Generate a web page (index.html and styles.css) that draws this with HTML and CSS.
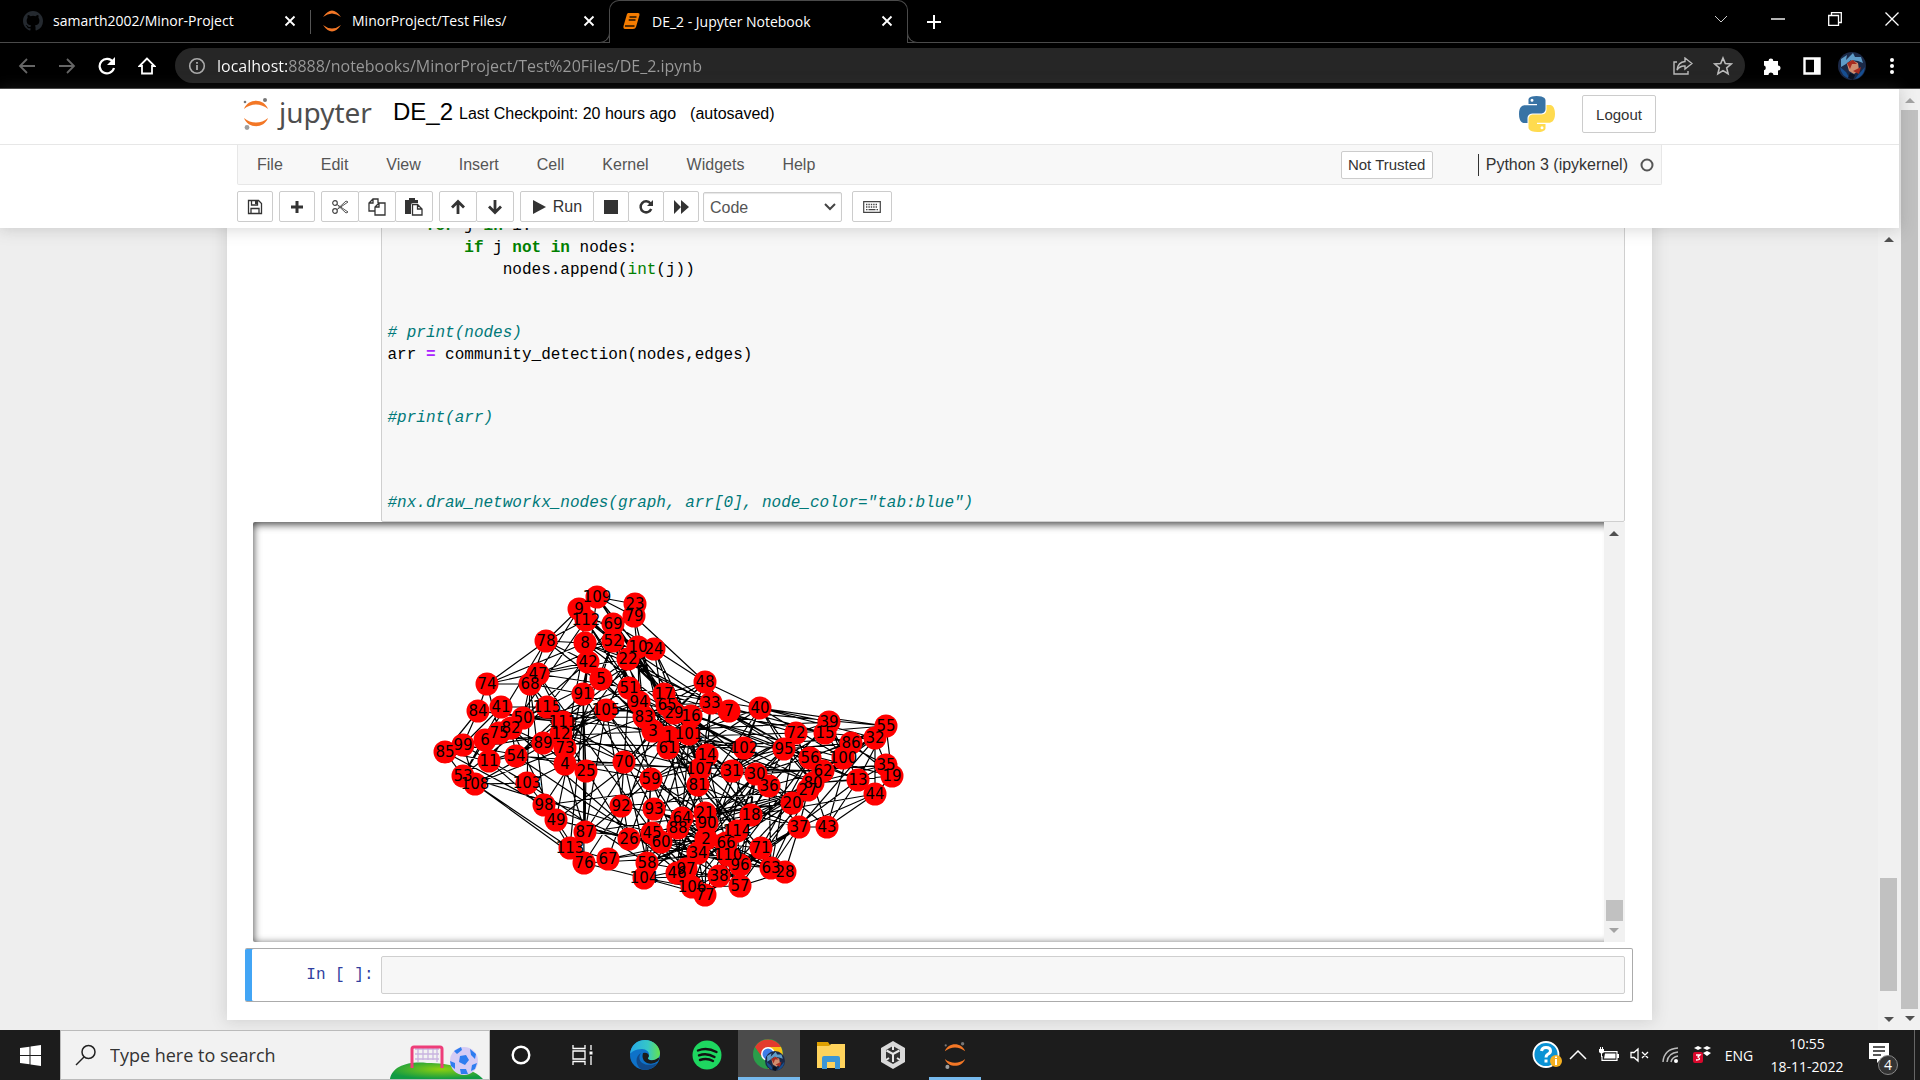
FILE: index.html
```html
<!DOCTYPE html>
<html lang="en">
<head>
<meta charset="utf-8">
<title>DE_2 - Jupyter Notebook</title>
<link rel="stylesheet" href="styles.css">
</head>
<body>
<svg class="defs" aria-hidden="true">
  <symbol id="jupyter" viewBox="0 0 26 32">
    <path d="M1 11C5 0 21 0 25 11C18 5 8 5 1 11Z" fill="#f37726"/>
    <path d="M1 20C5 31 21 31 25 20C18 26 8 26 1 20Z" fill="#f37726"/>
    <circle cx="22" cy="2" r="2" fill="#767677"/><circle cx="2" cy="4" r="1.3" fill="#767677"/><circle cx="4" cy="29.500" r="2.400" fill="#9e9e9e"/>
  </symbol>
  <symbol id="cross" viewBox="0 0 12 12"><path d="M1.500 1.500l9 9M10.500 1.500l-9 9" stroke="currentColor" stroke-width="1.800"/></symbol>
  <symbol id="up" viewBox="0 0 10 5"><path d="M0 5L5 0L10 5Z" fill="currentColor"/></symbol>
  <symbol id="down" viewBox="0 0 10 5"><path d="M0 0L5 5L10 0Z" fill="currentColor"/></symbol>
  <symbol id="portrait" viewBox="0 0 28 28">
    <circle cx="14" cy="14" r="14" fill="#1b2947"/>
    <path d="M3 7L9 3L8 8L15 1L17 5L23 5L25 11L20 9L13 8L8 12L3 15Z" fill="#5f9cc8"/>
    <path d="M9 12L14 8L20 11L21 18L16 22L11 19Z" fill="#d08e70"/>
    <path d="M9 11L15 8L19 12L14 12L12 17ZM15 19L23 15L21 22Z" fill="#a72b20"/>
    <path d="M2 15L8 20L12 27Q3 24 2 15ZM20 23L27 15Q26 25 17 27Z" fill="#174f92"/>
    <path d="M12 21L17 23L15 28L10 26Z" fill="#0b1120"/>
  </symbol>
</svg>

<header class="browser">
  <nav class="tabs" aria-label="Tabs">
    <div class="tab">
      <svg width="20" height="20" viewBox="0 0 16 16"><path fill="#24292f" d="M8 0C3.580 0 0 3.580 0 8c0 3.540 2.290 6.530 5.470 7.590.4.070.550-.170.550-.380v-1.490c-2.010.370-2.530-.490-2.690-.940-.090-.230-.480-.940-.820-1.130-.280-.150-.680-.520-.010-.530.630-.010 1.080.580 1.230.820.720 1.210 1.870.870 2.330.660.070-.520.280-.870.510-1.070-1.780-.2-3.640-.890-3.640-3.950 0-.870.310-1.590.820-2.150-.080-.2-.360-1.020.080-2.120 0 0 .670-.210 2.200.820a7.500 7.500 0 0 1 4 0c1.530-1.040 2.200-.820 2.200-.820.440 1.100.160 1.920.080 2.120.510.560.820 1.270.820 2.150 0 3.070-1.870 3.750-3.650 3.950.290.250.540.730.540 1.480v2.200c0 .210.150.460.550.380A8 8 0 0 0 16 8c0-4.420-3.580-8-8-8z"/></svg>
      <span class="tab-title">samarth2002/Minor-Project</span>
      <button class="tab-close" aria-label="Close tab"><svg width="12" height="12"><use href="#cross"/></svg></button>
    </div>
    <div class="tab divided">
      <svg width="20" height="22" viewBox="0 0 20 22"><path d="M1 7Q10-6 19 7Q10 0 1 7ZM1 15Q10 28 19 15Q10 22 1 15Z" fill="#f37726"/></svg>
      <span class="tab-title">MinorProject/Test Files/</span>
      <button class="tab-close" aria-label="Close tab"><svg width="12" height="12"><use href="#cross"/></svg></button>
    </div>
    <div class="tab active">
      <svg width="20" height="18" viewBox="0 0 20 18"><path d="M6 1H16Q18 1 17.500 3L14 15Q13.500 17 11 17H3Q1 17 1.500 14L5 2Z" fill="#f57c00"/><path d="M7.500 5H14.500M6.700 8H13.500M3 14H12.500" stroke="#201000" stroke-width="1.300"/></svg>
      <span class="tab-title">DE_2 - Jupyter Notebook</span>
      <button class="tab-close" aria-label="Close tab"><svg width="12" height="12"><use href="#cross"/></svg></button>
    </div>
    <button class="new-tab" aria-label="New tab"><svg width="16" height="16" viewBox="0 0 16 16"><path d="M8 1V15M1 8H15" stroke="#fff" stroke-width="2"/></svg></button>
    <div class="window-controls">
      <button aria-label="Search tabs"><svg width="14" height="8" viewBox="0 0 14 8"><path d="M1 1L7 7L13 1" stroke="#ccc" fill="none"/></svg></button>
      <button aria-label="Minimize"><svg width="14" height="14" viewBox="0 0 14 14"><path d="M0 7H14" stroke="#fff" stroke-width="1.400"/></svg></button>
      <button aria-label="Restore"><svg width="14" height="14" viewBox="0 0 14 14"><path d="M.7 3.500H10.500V13.300H.7ZM3.500 3V.7H13.300V10.500H11" stroke="#fff" stroke-width="1.300" fill="none"/></svg></button>
      <button aria-label="Close"><svg width="14" height="14" viewBox="0 0 14 14"><path d="M.5.5l13 13M13.500.5l-13 13" stroke="#fff" stroke-width="1.300"/></svg></button>
    </div>
  </nav>
  <div class="address-row">
    <button class="nav-button" aria-label="Back"><svg width="18" height="18" viewBox="0 0 18 18"><path d="M17 9H2M9 2L2 9L9 16" stroke="#666" stroke-width="1.800" fill="none"/></svg></button>
    <button class="nav-button" aria-label="Forward"><svg width="18" height="18" viewBox="0 0 18 18"><path d="M1 9H16M9 2L16 9L9 16" stroke="#666" stroke-width="1.800" fill="none"/></svg></button>
    <button class="nav-button" aria-label="Reload"><svg width="18" height="18" viewBox="0 0 18 18"><path d="M15 5A7.300 7.300 0 1 0 16 11" stroke="#fff" stroke-width="2.200" fill="none"/><path d="M17 0V8H9Z" fill="#fff"/></svg></button>
    <button class="nav-button" aria-label="Home"><svg width="18" height="18" viewBox="0 0 18 18"><path d="M9 1.500L1.500 9H4V16.500H14V9H16.500Z" stroke="#fff" stroke-width="1.800" fill="none"/></svg></button>
    <div class="omnibox">
      <svg width="18" height="18" viewBox="0 0 18 18"><circle cx="9" cy="9" r="7.300" stroke="#aaa" stroke-width="1.600" fill="none"/><path d="M9 8V13M9 5V6.700" stroke="#aaa" stroke-width="1.800"/></svg>
      <input class="url" type="text" aria-label="Address" value="localhost:8888/notebooks/MinorProject/Test%20Files/DE_2.ipynb">
      <button class="nav-button" aria-label="Share"><svg width="20" height="18" viewBox="0 0 20 18"><path d="M4 5H1V17H15V14" stroke="#bbb" stroke-width="1.400" fill="none"/><path d="M12 1L19 6.500L12 12V9Q7 8.500 4 13Q5 5 12 4.500Z" stroke="#bbb" stroke-width="1.400" fill="none"/></svg></button>
      <button class="nav-button" aria-label="Bookmark"><svg width="20" height="20" viewBox="0 0 20 20"><path d="M10 2L12.300 7.500L18.200 8L13.700 11.900L15.100 17.700L10 14.600L4.900 17.700L6.300 11.900L1.800 8L7.700 7.500Z" stroke="#bbb" stroke-width="1.600" fill="none"/></svg></button>
    </div>
    <div class="extensions">
      <button class="nav-button" aria-label="Extensions"><svg width="20" height="20" viewBox="0 0 20 20"><path d="M2 5H6.500A2.400 2.400 0 1 1 11.300 5H16V9.500A2.500 2.500 0 1 1 16 14.500V19H11.500A2.500 2.500 0 0 0 6.500 19H2V14.300A2.500 2.500 0 0 0 2 9.500Z" fill="#fff"/></svg></button>
      <button class="nav-button" aria-label="Side panel"><svg width="18" height="18" viewBox="0 0 18 18"><path d="M1.500 1.500H16.500V16.500H1.500Z" stroke="#fff" stroke-width="2.400" fill="none"/><path d="M11 1H17V17H11Z" fill="#fff"/></svg></button>
      <button class="nav-button" aria-label="Profile"><svg width="28" height="28"><use href="#portrait"/></svg></button>
      <button class="nav-button" aria-label="Menu"><svg width="6" height="18" viewBox="0 0 6 18"><circle cx="3" cy="3" r="2" fill="#fff"/><circle cx="3" cy="9" r="2" fill="#fff"/><circle cx="3" cy="15" r="2" fill="#fff"/></svg></button>
    </div>
  </div>
</header>

<div class="viewport">
  <div class="page">
    <header class="notebook-header">
      <div class="wrap title-bar">
        <a class="logo" href="#"><svg width="26" height="32"><use href="#jupyter"/></svg><span>jupyter</span></a>
        <h1 class="notebook-name">DE_2</h1>
        <span class="checkpoint">Last Checkpoint: 20 hours ago</span>
        <span class="autosave">(autosaved)</span>
        <svg class="python" width="36" height="36" viewBox="0 0 36 36">
          <path d="M17.500 0C9 0 9.500 3.800 9.500 3.800V8H18V9.300H6S0 8.700 0 18S5 27 5 27H8.500V22.500S8.300 17.500 13.500 17.500H21.800S26.500 17.500 26.500 13V4.700S27.300 0 17.500 0ZM13 2.700A1.500 1.500 0 1 1 13 5.700A1.500 1.500 0 0 1 13 2.700Z" fill="#3873a5"/>
          <path d="M18.500 36C27 36 26.500 32.200 26.500 32.200V28H18V26.700H30S36 27.300 36 18S31 9 31 9H27.500V13.500S27.700 18.500 22.500 18.500H14.200S9.500 18.500 9.500 23V31.300S8.700 36 18.500 36ZM23 33.300A1.500 1.500 0 1 1 23 30.300A1.500 1.500 0 0 1 23 33.300Z" fill="#ffdb4f"/>
        </svg>
        <button class="button logout">Logout</button>
      </div>
      <div class="menu-line">
        <nav class="wrap menubar" aria-label="Notebook menu">
          <a href="#">File</a><a href="#">Edit</a><a href="#">View</a><a href="#">Insert</a><a href="#">Cell</a><a href="#">Kernel</a><a href="#">Widgets</a><a href="#">Help</a>
          <button class="button trust">Not Trusted</button>
          <span class="kernel">Python 3 (ipykernel)<svg width="14" height="14" viewBox="0 0 14 14"><circle cx="7" cy="7" r="5.500" stroke="#555" stroke-width="2" fill="none"/></svg></span>
        </nav>
      </div>
      <div class="wrap toolbar">
        <div class="group"><button class="button tool" aria-label="Save"><svg width="16" height="16" viewBox="0 0 16 16"><path d="M1.500 1.500H11.500L14.500 4.500V14.500H1.500ZM4.500 1.500V6H10.500V1.500M4 14.500V9.500H12V14.500" stroke="#333" stroke-width="1.300" fill="none"/><path d="M8 2H10V5H8Z" fill="#333"/></svg></button></div>
        <div class="group"><button class="button tool" aria-label="Insert cell"><svg width="14" height="14" viewBox="0 0 14 14"><path d="M7 1V13M1 7H13" stroke="#333" stroke-width="3"/></svg></button></div>
        <div class="group wide"><button class="button tool" aria-label="Cut"><svg width="18" height="16" viewBox="0 0 18 16"><path d="M6 5.500L17 13M6 10.500L17 3M7 6.500L15 14L17 13M7 9.500L15 2L17 3" stroke="#555" fill="none"/><circle cx="4" cy="4" r="2.300" stroke="#444" stroke-width="1.200" fill="none"/><circle cx="4" cy="12" r="2.300" stroke="#444" stroke-width="1.200" fill="none"/></svg></button><button class="button tool" aria-label="Copy"><svg width="18" height="18" viewBox="0 0 18 18"><path d="M7 13H1V5L5 1H10V5M5 1V5H1M11 5H17V17H7V9ZM11 5V9H7" stroke="#333" stroke-width="1.300" fill="none"/></svg></button><button class="button tool" aria-label="Paste"><svg width="18" height="18" viewBox="0 0 18 18"><path d="M0 2H4V0H10V2H13V5H8Q6 5 6 7V16H0Z" fill="#333"/><path d="M7.500 6.500H12.500L17 11V17H7.500ZM12.500 6.500V11H17" stroke="#333" stroke-width="1.300" fill="none"/></svg></button></div>
        <div class="group wide"><button class="button tool" aria-label="Move up"><svg width="16" height="16" viewBox="0 0 16 16"><path d="M8 15V3M2 8.500L8 2.500L14 8.500" stroke="#333" stroke-width="2.800" fill="none"/></svg></button><button class="button tool" aria-label="Move down"><svg width="16" height="16" viewBox="0 0 16 16"><path d="M8 1V13M2 7.500L8 13.500L14 7.500" stroke="#333" stroke-width="2.800" fill="none"/></svg></button></div>
        <div class="group"><button class="button tool run"><svg width="14" height="14" viewBox="0 0 14 14"><path d="M1 0L14 7L1 14Z" fill="#333"/></svg>Run</button><button class="button tool" aria-label="Stop"><svg width="14" height="14"><path d="M0 0H14V14H0Z" fill="#333"/></svg></button><button class="button tool" aria-label="Restart"><svg width="16" height="16" viewBox="0 0 16 16"><path d="M12.500 4.500A5.500 5.500 0 1 0 13.200 10" stroke="#333" stroke-width="2.500" fill="none"/><path d="M15 1V7H9Z" fill="#333"/></svg></button><button class="button tool" aria-label="Restart and run all"><svg width="16" height="14" viewBox="0 0 16 14"><path d="M1 0L8 7V0L16 7L8 14V7L1 14Z" fill="#333"/></svg></button></div>
        <div class="select-box"><select aria-label="Cell type"><option>Code</option></select><svg width="12" height="8" viewBox="0 0 12 8"><path d="M1 1L6 6L11 1" stroke="#444" stroke-width="2" fill="none"/></svg></div>
        <button class="button tool palette" aria-label="Command palette"><svg width="18" height="12" viewBox="0 0 18 12"><path d="M.7.7H17.300V11.300H.7Z" stroke="#444" stroke-width="1.200" fill="none"/><path d="M3 3.500H15M3 6H15" stroke="#444" stroke-width="1.300" stroke-dasharray="1.400 1"/><path d="M3 8.700H4.500M5.500 8.700H12.500M13.500 8.700H15" stroke="#444" stroke-width="1.300"/></svg></button>
      </div>
    </header>

    <div class="site">
      <main class="site-content">
        <section class="notebook">
          <div class="code-cell">
            <div class="prompt"></div>
            <div class="code-area">
<pre class="code">    <b>for</b> j <b>in</b> i:
        <b>if</b> j <b>not</b> <b>in</b> nodes:
            nodes.append(<span class="builtin">int</span>(j))</pre>
<pre class="code"><i># print(nodes)</i>
arr <span class="operator">=</span> community_detection(nodes,edges)</pre>
<pre class="code spaced"><i>#print(arr)</i></pre>
<pre class="code"><i>#nx.draw_networkx_nodes(graph, arr[0], node_color="tab:blue")</i></pre>
            </div>
          </div>
          <div class="output">
            <div class="output-scroll"><svg id="graph" class="graph" width="500" height="350" viewBox="420 580 500 350" role="img" aria-label="Network graph"></svg></div>
            <div class="scrollbar output-bar"><svg width="10" height="5"><use href="#up"/></svg><span class="thumb"></span><svg class="pale" width="10" height="5"><use href="#down"/></svg></div>
          </div>
          <div class="selected-cell">
            <label class="prompt" for="new-cell">In [ ]:</label>
            <input id="new-cell" class="cell-input" type="text">
          </div>
        </section>
      </main>
      <div class="scrollbar site-bar"><svg width="10" height="5"><use href="#up"/></svg><span class="thumb"></span><svg width="10" height="5"><use href="#down"/></svg></div>
    </div>
  </div>
  <div class="scrollbar page-bar"><svg class="pale" width="10" height="5"><use href="#up"/></svg><span class="thumb"></span><svg width="10" height="5"><use href="#down"/></svg></div>
</div>

<footer class="taskbar">
  <button class="start" aria-label="Start"><svg width="21" height="21" viewBox="0 0 21 21"><path d="M0 3L9.500 1.700V10H0ZM10.500 1.500L21 0V10H10.500ZM0 11H9.500V19.300L0 18ZM10.500 11H21V21L10.500 19.500Z" fill="#fff"/></svg></button>
  <div class="search">
    <svg width="22" height="22" viewBox="0 0 22 22"><circle cx="13.500" cy="8" r="6.500" stroke="#222" stroke-width="1.500" fill="none"/><path d="M9 13L1 21" stroke="#222" stroke-width="1.500"/></svg>
    <input type="text" aria-label="Search" placeholder="Type here to search">
    <svg class="highlight" width="100" height="48" viewBox="0 0 100 48">
      <defs><radialGradient id="hill" cx=".55" cy=".4" r=".6"><stop stop-color="#8ed00f"/><stop offset="1" stop-color="#119b43"/></radialGradient></defs>
      <path d="M1 48C3 36 18 30 38 32C60 32 86 38 94 48Z" fill="url(#hill)"/>
      <path d="M26 18H50M26 23H50M26 28H50M29 17V31M34 17V29M39 17V29M44 17V29M48 17V31" stroke="#c9b4e0" stroke-width="1.300" fill="none"/>
      <path d="M23 37V18Q23 16 25 16H51Q53 16 53 18V37" stroke="#ee3d79" stroke-width="3" fill="none"/>
      <circle cx="75" cy="30" r="14" fill="#d5ccf5"/>
      <path d="M71 25L77 24L80 29L76 34L70 31ZM65 20L72 16L73 19L68 23ZM81 18L87 23L86 28L82 24ZM61 30L66 32L66 38L62 35ZM71 38L77 38L79 43L72 43ZM83 34L88 32L86 38L82 40Z" fill="#2e7df0"/>
    </svg>
  </div>
  <nav class="apps" aria-label="Taskbar apps">
    <button aria-label="Cortana"><svg width="20" height="20" viewBox="0 0 20 20"><circle cx="10" cy="10" r="8.300" stroke="#fff" stroke-width="2.400" fill="none"/></svg></button>
    <button aria-label="Task view"><svg width="22" height="20" viewBox="0 0 22 20"><path d="M1 0V3.500H13V0M1 6H13V14H1ZM1 20V16.500H13V20M19 0V5M19 11V20" stroke="#fff" stroke-width="1.300" fill="none"/><path d="M17.500 6.500H20.500V9.500H17.500Z" fill="#fff"/></svg></button>
    <button aria-label="Edge"><svg width="30" height="30" viewBox="0 0 30 30"><defs><linearGradient id="edge-top"><stop stop-color="#26a8e8"/><stop offset=".6" stop-color="#36c7c6"/><stop offset="1" stop-color="#65e34d"/></linearGradient></defs><circle cx="15" cy="15" r="15" fill="#0e72c9"/><path d="M0 14C1 5 7 0 15 0C24 0 30 7 30 13C30 19 25 21 20 20C17 19 18 18 19 16C20 12 16 9 12 9C6 9 1 12 0 14Z" fill="url(#edge-top)"/><path d="M11 13C5 22 17 28 27 23C23 30 15 31 11 29C5 25 5 16 11 13Z" fill="#114a8b"/><path d="M13 13Q11 20 17 23Q23 25 28 21Q31 16 28 18Q24 21 20 20C17 19 18 18 19 16Q18 12 13 13Z" fill="#1c1c1c"/></svg></button>
    <button aria-label="Spotify"><svg width="30" height="30" viewBox="0 0 30 30"><circle cx="15" cy="15" r="14.500" fill="#1ed760"/><path d="M6 10.500Q15 7 24.500 12M7 15.300Q15 12.500 22.500 17M8 20Q15 17.500 21 21" stroke="#121212" stroke-width="2.400" fill="none" stroke-linecap="round"/></svg></button>
    <button class="current" aria-label="Chrome"><svg width="32" height="32" viewBox="0 0 32 32"><circle cx="15" cy="15" r="15" fill="#2a9d4a"/><path d="M2 8A15 15 0 0 1 28 8H15L9 18Z" fill="#e33b2e"/><path d="M15 8H28A15 15 0 0 1 15 30L21 19Z" fill="#fbc116"/><circle cx="15" cy="15" r="7" fill="#fff"/><circle cx="15" cy="15" r="5.500" fill="#3d7de8"/><svg x="12" y="12" width="20" height="20"><use href="#portrait"/></svg></svg></button>
    <button aria-label="File Explorer"><svg width="28" height="28" viewBox="0 0 28 28"><path d="M0 1H11L13 4H28V26H0Z" fill="#dfa000"/><path d="M0 5H12L14 3H28V27H0Z" fill="#ffd35c"/><path d="M5 28V17Q5 15 7 15H21Q23 15 23 17V28H18V21H10V28Z" fill="#3d96d6"/></svg></button>
    <button aria-label="Unity Hub"><svg width="26" height="28" viewBox="0 0 26 28"><path d="M13 0L25 7V21L13 28L1 21V7Z" fill="#d9d9d9"/><path d="M13 5L20 9V19L13 23L6 19V9Z" fill="#343434"/><path d="M13 13V21M13 13L6.500 9.500M13 13L19.500 9.500M13 5V9M6 19L9 17M20 19L17 17" stroke="#e8e8e8" stroke-width="2"/></svg></button>
    <button class="running" aria-label="Jupyter"><svg width="22" height="27"><use href="#jupyter"/></svg></button>
  </nav>
  <div class="tray">
    <button aria-label="Help"><svg width="30" height="28" viewBox="0 0 30 28"><circle cx="14" cy="13.500" r="12.500" fill="#0b92d4" stroke="#fff" stroke-width="1.800"/><path d="M9.500 10Q10 6.500 14 6.500Q18.500 6.500 18.500 10Q18.500 12 15.500 13.500Q14 14.500 14 16.500M14 18.500V21.500" stroke="#fff" stroke-width="3" fill="none"/><circle cx="24" cy="20" r="6" fill="#f4af20"/><path d="M24 18V24M24 15.500V17" stroke="#fff" stroke-width="2"/></svg></button>
    <button aria-label="Hidden icons"><svg width="18" height="10" viewBox="0 0 18 10"><path d="M1 9L9 1L17 9" stroke="#fff" stroke-width="1.500" fill="none"/></svg></button>
    <button aria-label="Battery"><svg width="22" height="16" viewBox="0 0 22 16"><path d="M5 4.700H19V13.300H4V9" stroke="#fff" stroke-width="1.200" fill="none"/><path d="M7 6.500H17.500V11.500H6ZM19 7H21V11H19ZM1 2H6V5Q3.500 8 1 5ZM2 0H3V2H2ZM4 0H5V2H4ZM3 6H4V10H3Z" fill="#fff"/></svg></button>
    <button aria-label="Volume"><svg width="20" height="16" viewBox="0 0 20 16"><path d="M1 5.500H4L8 2V14L4 10.500H1ZM12 5L18 11M18 5L12 11" stroke="#fff" stroke-width="1.300" fill="none"/></svg></button>
    <button aria-label="Wi-Fi"><svg width="18" height="18" viewBox="0 0 18 18"><path d="M1 16Q2 3 16 2M5 16Q6 7 16 6M9 16Q10 11 16 10" stroke="#bbb" stroke-width="1.500" fill="none"/><circle cx="14" cy="15" r="2" fill="#fff"/></svg></button>
    <button aria-label="Dropbox"><svg width="20" height="20" viewBox="0 0 20 20"><path d="M2 3L6 1L10 3L6 5ZM11 3L15 1L19 3L15 5ZM11 8L15 6L19 8L15 11Z" fill="#fff"/><rect x="1" y="7" width="10" height="11" rx="2" fill="#d9082c"/><path d="M4 10H8L6 12Q10 15 4 15" stroke="#fff" stroke-width="1.300" fill="none"/></svg></button>
    <span class="language">ENG</span>
    <time class="clock" datetime="2022-11-18T10:55">10:55<br>18-11-2022</time>
    <button class="notices" aria-label="Notifications"><svg width="22" height="20" viewBox="0 0 22 20"><path d="M0 0H20V16H12L8 20V16H0Z" fill="#fff"/><path d="M4 4H16M4 8H16M4 12H12" stroke="#222" stroke-width="1.300"/></svg><span class="badge">4</span></button>
  </div>
</footer>
<script src="graph.js"></script>
</body>
</html>
```
FILE: styles.css
```css
* { box-sizing: border-box; }

body {
  margin: 0;
  height: 100vh;
  display: flex;
  flex-direction: column;
  overflow: hidden;
  font-family: "Liberation Sans", Arial, sans-serif;
  font-size: 16px;
  color: #000;
}

button, input, select { font: inherit; margin: 0; }
button { padding: 0; border: 0; background: none; display: flex; align-items: center; justify-content: center; }
a { color: inherit; text-decoration: none; }
svg { flex: none; display: block; }
.defs { position: absolute; width: 0; height: 0; }

/* Browser chrome */
.browser { background: #000; color: #fff; border-bottom: 1px solid #484848; font-family: "Open Sans", "Segoe UI", sans-serif; }
.tabs { display: flex; height: 43px; padding-left: 11px; box-shadow: inset 0 -1px #4a4a4a; }
.tab { width: 299px; display: flex; align-items: center; gap: 10px; padding: 0 12px 2px; font-size: 14px; }
.tab.divided { background: linear-gradient(#555, #555) 0 10px / 1px 24px no-repeat; }
.tab.active { position: relative; background: #000; border: 1px solid #4a4a4a; border-bottom: 0; border-radius: 10px 10px 0 0; }
.tab.active::before, .tab.active::after { content: ""; position: absolute; bottom: 0; width: 10px; height: 10px; border-bottom: 1px solid #4a4a4a; background: #000; }
.tab.active::before { right: 100%; border-right: 1px solid #4a4a4a; border-bottom-right-radius: 10px; }
.tab.active::after { left: 100%; border-left: 1px solid #4a4a4a; border-bottom-left-radius: 10px; }
.tab-title { flex: 1; white-space: nowrap; }
.tab-close { width: 16px; height: 16px; color: #fff; }
.new-tab { width: 52px; }
.window-controls { display: flex; margin-left: auto; height: 37px; }
.window-controls button { width: 57px; }

.address-row { display: flex; align-items: center; height: 45px; padding-left: 7px; }
.nav-button { width: 40px; height: 34px; }
.omnibox { flex: 1; display: flex; align-items: center; height: 35px; margin-left: 8px; padding: 0 2px 0 13px; background: #262626; border-radius: 18px; }
.url {
  flex: 1;
  padding: 0 0 0 11px;
  border: 0;
  outline: 0;
  font-size: 16px;
  color: transparent;
  background: linear-gradient(to right, #fff 82px, #9a9a9a 82px);
  background-clip: text;
  -webkit-background-clip: text;
}
.extensions { display: flex; padding: 0 8px 0 7px; }

/* Scrollbars */
.scrollbar { width: 21px; flex: none; display: flex; flex-direction: column; align-items: center; background: #f1f1f1; color: #505050; }
.scrollbar .thumb { width: 17px; background: #c1c1c1; }
.pale { color: #a3a3a3; }
.page-bar { padding: 9px 0; }
.page-bar .thumb { flex: 1; margin: 7px 0; }
.site-bar { padding: 9px 0 8px; }
.site-bar .thumb { height: 113px; margin: auto 0 26px; }
.output-bar { padding: 9px 0; }
.output-bar .thumb { height: 21px; margin: auto 0 7px; }

/* Notebook header */
.viewport { flex: 1; min-height: 0; display: flex; background: #fff; }
.page { flex: 1; min-width: 0; display: flex; flex-direction: column; }
.wrap { max-width: 1425px; margin: 0 auto; display: flex; align-items: center; }
.notebook-header { position: relative; z-index: 1; background: #fff; box-shadow: 0 0 15px 1px rgba(87, 87, 87, .25); }
.title-bar { height: 55px; padding: 0 6px 5px; }
.logo { display: flex; align-items: center; gap: 10px; width: 150px; font: 28px/36px "Noto Sans", sans-serif; color: #4e4e4e; }
.logo span { margin-top: -5px; }
.notebook-name { margin: 0 6px 4px 0; font-size: 24px; font-weight: 400; }
.autosave { margin-left: 14px; }
.python { margin-left: auto; }
.button { border: 1px solid #ccc; border-radius: 2px; background: #fff; color: #333; }
.logout { width: 74px; height: 38px; margin-left: 27px; font-size: 15px; }
.menu-line { border-top: 1px solid #e7e7e7; }
.menubar { height: 40px; background: #f8f8f8; border: 1px solid #e7e7e7; border-top: 0; border-radius: 0 0 2px 2px; color: #555; }
.menubar a { padding: 0 19px; }
.trust { width: 92px; height: 28px; margin-left: auto; font-size: 15px; }
.kernel { display: flex; align-items: center; gap: 12px; margin-left: 45px; padding: 2px 7px; border-left: 1px solid #333; color: #333; }
.toolbar { height: 43px; gap: 6px; }
.group { display: flex; }
.tool { width: 36px; height: 31px; }
.wide .tool { width: 38px; }
.group .tool + .tool { margin-left: -1px; }
.tool.run { width: 74px; gap: 7px; }
.select-box { position: relative; width: 139px; height: 30px; margin-left: -2px; }
.select-box select { width: 100%; height: 100%; padding: 2px 6px 0; appearance: none; border: 1px solid #ccc; border-radius: 2px; background: #fff; color: #555; box-shadow: inset 0 1px 1px rgba(0, 0, 0, .1); }
.select-box svg { position: absolute; right: 6px; top: 11px; }
.tool.palette { width: 40px; margin-left: 4px; }

/* Notebook body */
.site { flex: 1; min-height: 0; display: flex; background: #eee; }
.site-content { flex: 1; min-width: 0; display: flex; flex-direction: column; justify-content: flex-end; overflow: hidden; padding-bottom: 10px; }
.notebook { width: 1425px; max-width: 100%; flex: none; margin: 0 auto; padding: 0 19px 18px 18px; background: #fff; box-shadow: 0 0 15px 1px rgba(87, 87, 87, .2); }
.code-cell { display: flex; padding: 0 8px; }
.prompt { width: 128px; flex: none; padding-right: 7px; text-align: right; font: 16px/22px "Liberation Mono", monospace; color: #303f9f; }
.code-area { flex: 1; padding: 7px 6px; background: #f7f7f7; border: 1px solid #cfcfcf; border-radius: 2px; }
.code { margin: 0 0 41px; font: 16px/22px "Liberation Mono", monospace; }
.code.spaced { margin-bottom: 63px; }
.code:last-child { margin-bottom: 0; }
.code b { color: #008000; }
.code i { color: #007979; }
.builtin { color: #008000; }
.operator { color: #aa22ff; font-weight: 700; }
.output { display: flex; margin: 0 8px 6px; }
.output-scroll { flex: 1; padding: 58px 0 12px 167px; border-radius: 2px; box-shadow: inset 0 2px 8px rgba(0, 0, 0, .8); clip-path: inset(0); margin-right: -8px; }
.output-bar { position: relative; }
.graph text { font: 15px "DejaVu Sans", sans-serif; text-anchor: middle; }
.graph circle { fill: #f00; }
.graph path { stroke: #000; stroke-width: 1.2; fill: none; }
.selected-cell { display: flex; align-items: center; padding: 7px; border: 1px solid #ababab; border-left: 0; border-radius: 2px; box-shadow: inset 7px 0 #42a5f5; }
.selected-cell .prompt { width: 129px; }
.cell-input { flex: 1; height: 38px; padding: 0 6px; border: 1px solid #cfcfcf; border-radius: 2px; background: #f7f7f7; outline: 0; font-family: "Liberation Mono", monospace; }

/* Taskbar */
.taskbar { flex: none; display: flex; height: 50px; background: #1c1c1c; color: #fff; font-family: "Open Sans", "Segoe UI", sans-serif; }
.start { width: 60px; }
.search { position: relative; display: flex; align-items: center; width: 430px; padding-left: 14px; background: #f2f2f2; border: 1px solid #bbb; }
.search input { flex: 1; min-width: 0; padding: 0 0 0 13px; border: 0; outline: 0; background: none; font-size: 18px; }
.search input::placeholder { color: #333; opacity: 1; }
.highlight { align-self: flex-end; }
.apps { display: flex; }
.apps button { width: 62px; }
.apps .current { background: #4b4b4b; box-shadow: inset 0 -3px #76b9ed; }
.apps .running { background: linear-gradient(#76b9ed, #76b9ed) center bottom / 52px 3px no-repeat; }
.tray { display: flex; align-items: center; margin-left: auto; }
.tray button { width: 31px; height: 50px; }
.language { width: 44px; text-align: center; font-size: 14px; }
.clock { width: 92px; text-align: center; font-size: 14px; line-height: 23px; }
.tray .notices { position: relative; width: 62px; margin-right: 5px; border-right: 1px solid #666; }
.notices svg { margin: 0 8px 4px 0; }
.badge { position: absolute; left: 25px; top: 25px; width: 20px; height: 20px; border: 1px solid #888; border-radius: 50%; background: #333; color: #fff; font-size: 14px; line-height: 18px; }
```
FILE: graph.js
```js
// Node positions: label -> [x, y]
const nodes = {
  109:[597,597],9:[579,609],112:[586,620],23:[635,604],79:[634,616],69:[613,624],52:[613,641],78:[546,641],8:[585,643],10:[638,647],24:[654,649],22:[628,659],42:[588,662],47:[538,674],68:[530,684],74:[487,684],5:[601,679],91:[583,694],51:[629,688],94:[639,702],17:[664,694],65:[667,705],29:[674,713],16:[691,716],83:[644,717],3:[653,731],1:[669,737],101:[689,734],61:[668,748],48:[705,682],33:[711,703],7:[729,711],40:[760,708],105:[606,710],115:[547,707],111:[563,722],12:[561,734],73:[565,748],89:[543,743],4:[565,764],25:[586,771],70:[624,762],59:[651,779],14:[707,755],107:[700,769],81:[698,785],102:[744,748],31:[732,771],30:[756,774],36:[769,786],95:[784,749],103:[527,783],98:[544,805],49:[556,820],92:[621,806],93:[654,809],87:[585,832],26:[629,839],45:[652,833],60:[661,842],64:[682,818],88:[678,828],21:[705,813],90:[707,823],2:[706,839],66:[726,843],114:[737,831],18:[751,815],71:[761,848],84:[478,711],41:[501,707],50:[523,718],82:[511,728],75:[499,733],6:[485,740],99:[463,745],85:[445,752],11:[489,761],54:[516,756],53:[463,776],108:[475,784],113:[570,848],76:[584,863],67:[608,859],58:[647,863],104:[644,878],46:[677,873],97:[686,869],34:[698,853],110:[728,855],96:[740,865],38:[719,876],106:[692,887],77:[705,895],57:[740,886],63:[771,868],28:[785,872],37:[799,827],43:[827,827],20:[792,803],27:[808,790],80:[813,783],62:[823,771],56:[810,758],100:[843,758],86:[851,743],32:[875,738],55:[886,726],15:[825,733],39:[829,722],72:[796,733],13:[858,780],44:[875,794],35:[886,765],19:[892,776]
};

// Outline that keeps generated links inside the body of the network
const outline = [[445,752],[478,708],[487,681],[546,638],[579,606],[597,595],[635,602],[657,648],[672,678],[705,680],[760,706],[829,719],[886,724],[894,776],[875,797],[827,830],[801,830],[786,874],[740,888],[705,897],[644,880],[584,865],[570,850],[473,787],[463,778]];

function inside(x, y) {
  let hit = false;
  for (let i = 0, j = outline.length - 1; i < outline.length; j = i++) {
    const [xi, yi] = outline[i], [xj, yj] = outline[j];
    if (yi > y !== yj > y && x < (xj - xi) * (y - yi) / (yj - yi) + xi) hit = !hit;
  }
  return hit;
}

let seed = 2022;
function random() {
  seed = (seed * 1664525 + 1013904223) % 4294967296;
  return seed / 4294967296;
}

const links = [[79,48],[48,40],[48,7],[108,113],[53,113],[108,76],[40,55],[40,39],[40,32],[7,55],[78,74],[78,9],[78,112],[78,8],[109,23],[109,79],[74,68],[74,42],[74,8],[74,84],[85,84],[85,53],[85,99],[37,28],[37,71],[37,63],[37,43],[43,44],[43,13],[37,44],[37,18],[104,77],[104,106],[76,104],[55,19],[32,35],[91,87],[98,81],[92,70],[25,87],[47,9],[24,48],[17,48],[55,72],[57,28]];
const names = Object.keys(nodes);
names.forEach((a, i) => names.slice(i + 1).forEach(b => {
  const [x1, y1] = nodes[a], [x2, y2] = nodes[b];
  const d = Math.hypot(x2 - x1, y2 - y1);
  // Links are densest within the outer communities and sparse in the middle
  const middle = Math.hypot((x1 + x2) / 2 - 610, (y1 + y2) / 2 - 775) < 75 ? 0.45 : 1;
  const chance = middle * (d < 75 ? 0.2 : d < 140 ? 0.1 : d < 210 ? 0.045 : d < 280 ? 0.012 : 0);
  if (random() > chance) return;
  for (let t = 0.1; t < 0.95; t += 0.1) {
    if (!inside(x1 + (x2 - x1) * t, y1 + (y2 - y1) * t)) return;
  }
  links.push([a, b]);
}));

const path = links.map(([a, b]) => `M${nodes[a]}L${nodes[b]}`).join("");
const circles = names.map(n => `<circle cx="${nodes[n][0]}" cy="${nodes[n][1]}" r="11.500"/>`).join("");
const labels = names.map(n => `<text x="${nodes[n][0]}" y="${nodes[n][1] + 5}">${n}</text>`).join("");
document.getElementById("graph").innerHTML = `<path d="${path}"/>${circles}${labels}`;
```
